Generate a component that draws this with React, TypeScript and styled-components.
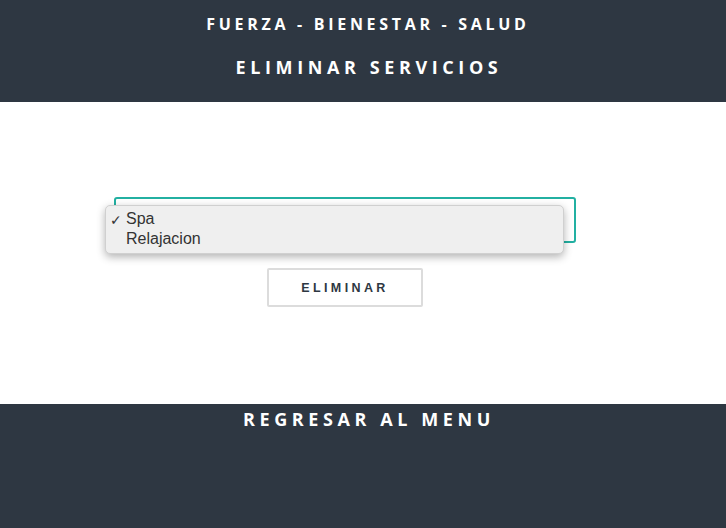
import React from 'react';
import styled, { createGlobalStyle } from 'styled-components';

const GlobalStyle = createGlobalStyle`
  html, body {
    margin: 0;
    padding: 0;
    background: #ffffff;
  }
  body {
    font-family: 'Open Sans', 'Liberation Sans', sans-serif;
  }
`;

const Page = styled.div`
  width: 726px;
  height: 528px;
  display: flex;
  flex-direction: column;
`;

const Header = styled.header`
  height: 102px;
  background: #2e3742;
  display: flex;
  flex-direction: column;
  align-items: center;
  box-sizing: border-box;
  padding-top: 12px;
`;

const Brand = styled.h2`
  margin: 0;
  color: #ffffff;
  font-family: 'Open Sans', sans-serif;
  font-weight: 700;
  font-size: 16px;
  line-height: 24px;
  letter-spacing: 3.7px;
  padding-left: 10px;
`;

const Title = styled.h1`
  margin: 18px 0 0;
  color: #ffffff;
  font-family: 'Open Sans', sans-serif;
  font-weight: 700;
  font-size: 18px;
  line-height: 26px;
  letter-spacing: 4.6px;
  padding-left: 12px;
`;

const Main = styled.main`
  height: 302px;
  box-sizing: border-box;
  padding-top: 95px;
  padding-left: 114px;
`;

const Form = styled.form`
  width: 462px;
  display: flex;
  flex-direction: column;
  align-items: center;
  gap: 25px;
`;

const SelectWrap = styled.div`
  position: relative;
  width: 100%;
`;

const SelectBox = styled.div`
  height: 46px;
  box-sizing: border-box;
  border: 2px solid #22b0a2;
  border-radius: 3px;
  background: #ffffff;
`;

// open option list of the select, drawn over the field
const Menu = styled.ul`
  position: absolute;
  left: -9px;
  top: 8px;
  width: 459px;
  height: 49px;
  box-sizing: border-box;
  margin: 0;
  padding: 3px 0 0;
  list-style: none;
  background: #efefef;
  border: 1px solid #d0d0d0;
  border-radius: 5px;
  box-shadow: 0 3px 8px rgba(0, 0, 0, 0.3);
`;

const Option = styled.li`
  position: relative;
  height: 20px;
  line-height: 20px;
  padding-left: 20px;
  font-family: 'Liberation Sans', Arial, sans-serif;
  font-size: 16px;
  color: #333333;
`;

const Check = styled.span`
  position: absolute;
  left: 4px;
  top: 1px;
  font-size: 14px;
  font-weight: 700;
  font-family: 'DejaVu Sans', sans-serif;
`;

const DeleteButton = styled.button`
  width: 156px;
  height: 39px;
  background: #ffffff;
  border: 2px solid #dcdcdc;
  border-radius: 2px;
  font-family: 'Liberation Sans', Arial, sans-serif;
  font-weight: 700;
  font-size: 12.5px;
  letter-spacing: 3.4px;
  padding: 0;
  color: #2e3742;
  cursor: pointer;
`;

const Footer = styled.footer`
  flex: 1;
  background: #2e3742;
  display: flex;
  justify-content: center;
  align-items: flex-start;
  padding-top: 2px;
`;

const BackLink = styled.a`
  color: #ffffff;
  text-decoration: none;
  font-family: 'Open Sans', sans-serif;
  font-weight: 700;
  font-size: 18px;
  line-height: 26px;
  letter-spacing: 4.6px;
  padding-left: 12px;
`;

const services = ['Spa', 'Relajacion'];

const App = () => {
  return (
    <>
      <GlobalStyle />
      <Page>
        <Header>
          <Brand>FUERZA - BIENESTAR - SALUD</Brand>
          <Title>ELIMINAR SERVICIOS</Title>
        </Header>

        <Main>
          <Form onSubmit={e => e.preventDefault()}>
            <SelectWrap>
              <SelectBox />
              <Menu>
                {services.map((s, i) => (
                  <Option key={s}>
                    {i === 0 && <Check>✓</Check>}
                    {s}
                  </Option>
                ))}
              </Menu>
            </SelectWrap>
            <DeleteButton type="submit">ELIMINAR</DeleteButton>
          </Form>
        </Main>

        <Footer>
          <BackLink href="#">REGRESAR AL MENU</BackLink>
        </Footer>
      </Page>
    </>
  );
};

export default App;
